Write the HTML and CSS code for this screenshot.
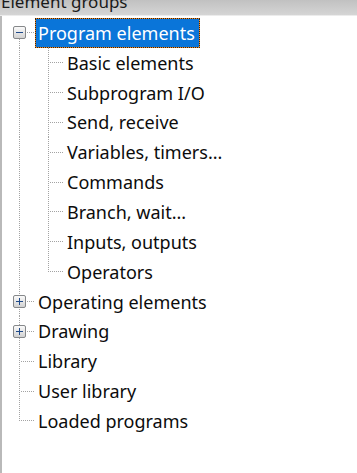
FILE: index.html
```html
<!DOCTYPE html>
<html>
<head>
<meta charset="utf-8">
<link rel="stylesheet" href="styles.css">
</head>
<body>
<div class="panel">
  <div class="header"><span class="title">Element groups</span></div>
  <div class="tree">
    <div class="row">
      <span class="c exp first"><span class="box minus"></span></span>
      <span class="label selected">Program elements</span>
    </div>
    <div class="row"><span class="c pipe"></span><span class="c tee"></span><span class="label">Basic elements</span></div>
    <div class="row"><span class="c pipe"></span><span class="c tee"></span><span class="label">Subprogram I/O</span></div>
    <div class="row"><span class="c pipe"></span><span class="c tee"></span><span class="label">Send, receive</span></div>
    <div class="row"><span class="c pipe"></span><span class="c tee"></span><span class="label">Variables, timers...</span></div>
    <div class="row"><span class="c pipe"></span><span class="c tee"></span><span class="label">Commands</span></div>
    <div class="row"><span class="c pipe"></span><span class="c tee"></span><span class="label">Branch, wait...</span></div>
    <div class="row"><span class="c pipe"></span><span class="c tee"></span><span class="label">Inputs, outputs</span></div>
    <div class="row"><span class="c pipe"></span><span class="c elbow"></span><span class="label">Operators</span></div>
    <div class="row">
      <span class="c exp"><span class="box plus"></span></span>
      <span class="label">Operating elements</span>
    </div>
    <div class="row">
      <span class="c exp"><span class="box plus"></span></span>
      <span class="label">Drawing</span>
    </div>
    <div class="row"><span class="c tee"></span><span class="label">Library</span></div>
    <div class="row"><span class="c tee"></span><span class="label">User library</span></div>
    <div class="row"><span class="c elbow"></span><span class="label">Loaded programs</span></div>
  </div>
</div>
</body>
</html>
```
FILE: styles.css
```css
:root {
  --dot: #a3a3a3;
  --v: repeating-linear-gradient(to bottom, var(--dot) 0 1px, transparent 1px 2px);
  --h: repeating-linear-gradient(to right, var(--dot) 0 1px, transparent 1px 2px);
}

html, body {
  margin: 0;
  padding: 0;
  background: #fff;
}

.panel {
  width: 357px;
  height: 473px;
  display: flex;
  flex-direction: column;
  font-family: "Noto Sans", "Open Sans", sans-serif;
  font-size: 18px;
  color: #0c0c0c;
  overflow: hidden;
}

.header {
  height: 16px;
  flex: none;
  background: linear-gradient(to bottom, #c1c1c1, #d5d5d5);
  border-bottom: 1px solid #ececec;
  overflow: hidden;
  box-sizing: border-box;
}

.title {
  display: block;
  margin-top: -9px;
  padding-left: 1px;
  line-height: 22px;
  font-size: 17px;
  color: #1a1a1a;
}

.tree {
  flex: 1;
  border-left: 2px solid #b9b9b9;
  padding-top: 2px;
  padding-left: 5px;
}

.row {
  display: flex;
  align-items: stretch;
  height: 29.85px;
}

.c {
  flex: none;
  width: 29px;
}

.pipe {
  background: var(--v) 12px 0 / 1px 100% no-repeat;
}

.tee {
  background:
    var(--v) 12px 0 / 1px 100% no-repeat,
    var(--h) 14px 50% / 13px 1px no-repeat;
}

.elbow {
  background:
    var(--v) 12px 0 / 1px 50% no-repeat,
    var(--h) 14px 50% / 13px 1px no-repeat;
}

.exp {
  display: flex;
  align-items: center;
  padding-left: 6px;
  box-sizing: border-box;
  background:
    var(--v) 12px 0 / 1px 100% no-repeat,
    var(--h) 20px 50% / 7px 1px no-repeat;
}

.exp.first {
  background:
    var(--v) 12px 100% / 1px 50% no-repeat,
    var(--h) 20px 50% / 7px 1px no-repeat;
}

.box {
  width: 13px;
  height: 13px;
  box-sizing: border-box;
  border: 1px solid #86888a;
  border-radius: 2px;
  background: linear-gradient(to bottom, #fafafa, #d2d2d2);
  display: flex;
  align-items: center;
  justify-content: center;
  position: relative;
}

.box::before {
  content: "";
  width: 7px;
  height: 1px;
  background: #1f4a8a;
}

.plus::after {
  content: "";
  position: absolute;
  left: 5px;
  top: 2px;
  width: 1px;
  height: 7px;
  background: #1f4a8a;
}

.label {
  display: flex;
  align-items: center;
  padding-left: 2px;
  white-space: nowrap;
  line-height: 1;
}

.selected {
  margin-left: -1px;
  width: 165px;
  box-sizing: border-box;
  padding: 0 0 0 2px;
  color: #fff;
  border: 1px dotted #3b2510;
  background:
    linear-gradient(#0a75d9, #0a75d9) padding-box,
    linear-gradient(#ea8a2a, #ea8a2a) border-box;
}
```
